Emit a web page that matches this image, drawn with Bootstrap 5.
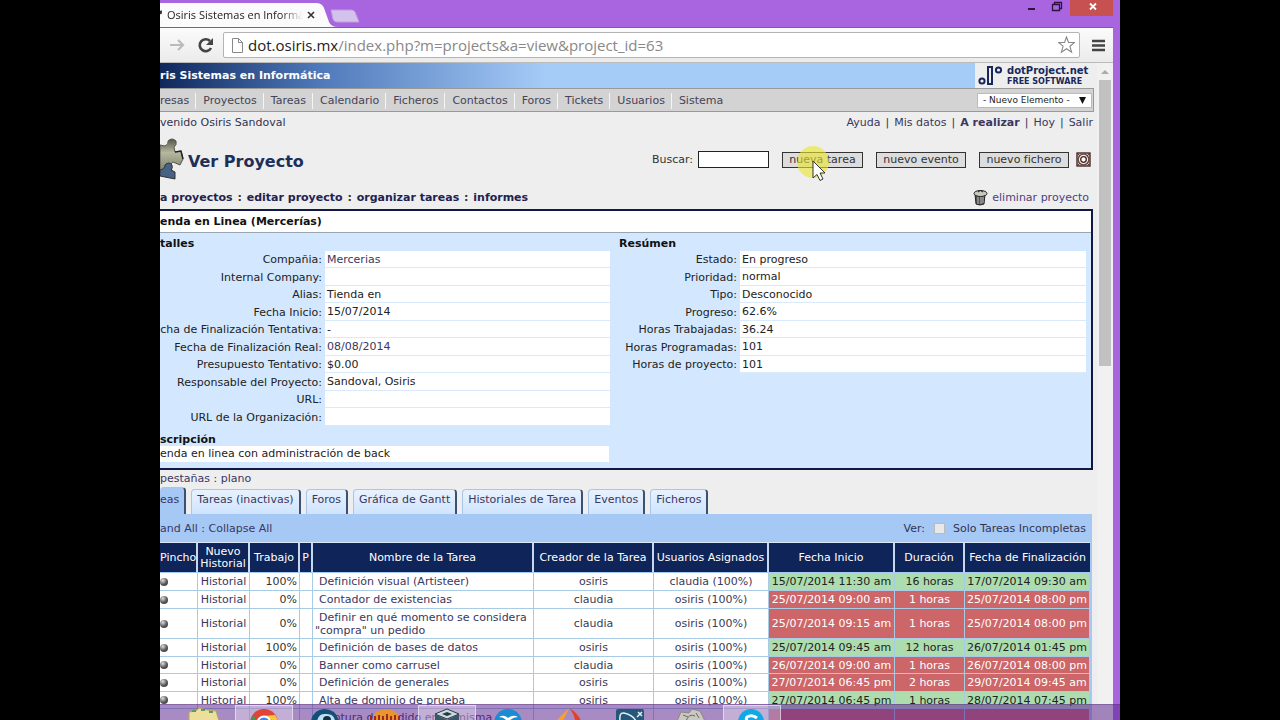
<!DOCTYPE html>
<html lang="es">
<head>
<meta charset="utf-8">
<meta name="viewport" content="width=device-width, initial-scale=1">
<title>Osiris Sistemas en Informática</title>
<link href="https://cdn.jsdelivr.net/npm/bootstrap@5.3.0/dist/css/bootstrap.min.css" rel="stylesheet">
<style>
body{background:#000;font-family:"DejaVu Sans",Verdana,sans-serif;font-size:11px;line-height:13px;color:#333}
a{color:#3a3760;text-decoration:none}
.desktop{width:75%;height:100vh;background:#a965e0;padding-right:7px}
.tabstrip{height:27px}
.page-tab{width:164px;height:24px;margin-top:3px;position:relative;color:#222}
.page-tab .shape{position:absolute;inset:0;width:178px;height:24px}
.page-tab .caption{position:relative;width:136px;margin-left:7px;white-space:nowrap;font:11px/24px "Open Sans",sans-serif;-webkit-mask-image:linear-gradient(90deg,#000 84%,transparent)}
.page-tab button,.winbtn{border:0;background:none;padding:0;position:relative;line-height:0}
.spare-tab{flex:none;margin:9px 0 0 4px}
.winbtn{height:16px;width:26px}
.winbtn.close-win{width:43px;background:#c75050;margin-left:1px}
.toolbar{height:36px;background:linear-gradient(#fbfbfb,#ebebeb);border-bottom:1px solid #bbb;border-top:1px solid #8556a8}
.omnibox{height:26px;background:#fff;border:1px solid #b4b4b4;border-radius:2px;margin-left:9px;margin-right:12px}
.url-text{font:15px/24px "Open Sans",sans-serif;color:#888;margin-left:5px;white-space:nowrap}
.url-text b{font-weight:400;color:#222}
.viewport{background:#eee;overflow:hidden}
.app{padding-right:4px}
.scroller{width:16px;background:#f1f1f1;padding:0 2px}
.thumb{height:286px;background:#c1c1c1}
.banner{height:25px;background:linear-gradient(90deg,#0f285c 0,#4f79ba 160px,#a5cbf7 385px);color:#fff;font-weight:700;line-height:15px}
.dp-logo{height:25px;width:119px;background:#eee;margin-right:-1px}
.menu{height:24px;background:#d3d3d3;border:1px solid #999;border-left:0;margin-right:-1px}
.menu .links{padding-top:1px}
.menu .links a+a{border-left:1px solid #f5f5f5}
.menu .links a{padding:0 6px 0 7px;color:#444458;line-height:16px}
.menu .links a:first-child{padding-left:0}
.menu select{font:9px "DejaVu Sans",sans-serif;width:115px;height:15px;padding:0 5px;border:1px solid #bbb;background:#fff;color:#222;appearance:none}
.menu .pick{position:relative;margin-right:1px}
.menu .pick svg{position:absolute;right:6px;top:4px;pointer-events:none}
.user{height:20px;color:#333350}
.user .sep{margin:0 5px}
.titlebar{height:55px}
.titlebar h1{font-size:16px;line-height:20px;font-weight:700;color:#1d2f5a;margin:0;padding-top:4px}
.titlebar input{width:71px;height:17px;border:1px solid #222;background:#fff;margin-left:5px}
.titlebar button.act{width:90px;height:16px;border:1px solid #333;background:#ddd;color:#333;padding:0;line-height:14px;font-size:11px;margin-left:13px}
.titlebar button.slim{width:81px}
.titlebar .help{margin:0 2px 0 7px}
.crumbs{height:20px;margin-bottom:2px;font-weight:700}
.crumbs .remove{font-weight:400}
.crumbs i{font-style:normal;margin:0 1px}
.crumbs a{color:#22224e}
.crumbs .remove a{color:#4a4280}
.panel{border:2px solid #101a44;border-left:0;background:#d3e7fe;height:261px;color:#222}
.panel h2,.panel h3{font-size:11px;font-weight:700;margin:0;color:#111}
.panel h2{height:22px;line-height:22px;background:#fff;border-bottom:1px solid #9aa6b2}
.panel h3{height:18px;line-height:22px}
.panel h3.low{height:16px;line-height:20px}
.facts{border-collapse:separate;border-spacing:0;width:100%}
.facts th{font-weight:400;text-align:right;padding:0 3px 0 0;white-space:nowrap}
.facts td{background:#fff;border-bottom:1px solid #d9eafb;padding:0 0 0 2px}
.facts tr{height:17px}
.facts tr:nth-child(even){height:18px}
.left-facts{width:450px}
.left-facts th{width:165px}
.right-facts{margin-left:9px;margin-right:5px}
.right-facts th{width:121px}
.desc{background:#fff;height:16px;width:449px;line-height:16px}
.modes{height:17px;line-height:18px}
.tabs{height:27px}
.tabs a{height:25px;margin-left:4px;margin-right:1px;padding:0 5px;line-height:20px;background:linear-gradient(#e8f2fe,#cfe4fd);border:1px solid #a9c6e8;border-right:2px solid #3c5170;border-bottom:0;border-radius:4px 4px 0 0;white-space:nowrap}
.tabs a.on{height:27px;margin-left:0;background:#a6c8f5;border-left:0;padding-left:0;line-height:24px}
.board{background:#a6c8f5;padding-right:2px;margin-right:1px}
.filter{height:28px;color:#333350}
.filter input{width:11px;height:11px;margin:0 8px 0 9px;appearance:none;background:#e8e8e8;border:1px solid #bbb}
.tasks{table-layout:fixed;width:100%;border-collapse:separate;border-spacing:0;text-align:center;white-space:nowrap;background:#fff}
.tasks th{background:#0f2458;color:#fff;font-weight:400;height:31px;line-height:12px;padding:0;border-right:2px solid #c6d8ee;border-top:1px solid #dce8f8;border-bottom:1px solid #a6c8f5}
.tasks th:last-child{border-right:0}
.tasks td{padding:0;border-right:1px solid #a8cbe6;border-bottom:1px solid #a8cbe6;height:18px;line-height:13px}
.tasks tr.short td{height:17px}
.tasks tr.tall td{height:30px}
.tasks td:nth-child(3){text-align:right;padding-right:2px;color:#333}
.tasks td:nth-child(5){text-align:left;padding-left:2px;color:#3a3760}
.tasks td:nth-child(5) a{margin-left:4px}
.tasks td:first-child{text-align:left}
.tasks td:nth-child(6),.tasks td:nth-child(7){color:#3a3a55}
.tasks .done td:nth-child(n+8){background:#addcae;color:#222}
.tasks .late td:nth-child(n+8){background:#cc6668;color:#fff}
.ball{display:block;width:8px;height:8px;border-radius:50%;background:radial-gradient(circle at 35% 30%,#ddd,#555 55%,#333)}
.taskbar{position:absolute;left:0;right:0;bottom:0;height:16px;background:rgba(92,35,142,.53);border-top:1px solid rgba(90,50,120,.4);overflow:hidden}
.taskbar .slot{width:58px;height:16px;margin-right:3px;text-align:center;line-height:0}
.taskbar .slot.first{width:72px}
.taskbar .slot.live{background:rgba(255,255,255,.3);border:1px solid rgba(255,255,255,.5)}
.pointer{position:absolute;left:638px;top:144px;pointer-events:none}
</style>
</head>
<body>
<div class="desktop mx-auto position-relative overflow-hidden d-flex flex-column">
  <div class="tabstrip d-flex align-items-start flex-shrink-0">
    <div class="page-tab d-flex align-items-center">
      <svg class="shape" viewBox="0 0 178 24"><path d="M0 0H156Q162 0 164 5L169 19Q171 24 178 24H0Z" fill="#fbfbfb"/><path d="M0 8q2-2 2 1t-2 2z" fill="#333"/></svg>
      <span class="caption">Osiris Sistemas en Informá</span>
      <button aria-label="Cerrar pestaña" class="ms-1"><svg width="8" height="8" viewBox="0 0 8 8"><path d="M1 1l6 6M7 1L1 7" stroke="#333" stroke-width="1.6"/></svg></button>
    </div>
    <svg class="spare-tab" width="33" height="14" viewBox="0 0 33 14"><path d="M3 1H23Q26 1 27 3L31 13H9Q6 13 5 10Z" fill="#d4c1ec" stroke="#bda0e0"/></svg>
    <div class="ms-auto d-flex">
      <button class="winbtn" aria-label="Minimizar"><svg width="26" height="16"><path d="M11 9h7" stroke="#2b1540" stroke-width="2"/></svg></button>
      <button class="winbtn" aria-label="Restaurar"><svg width="26" height="16"><path d="M9.500 4.500h7v6h-7zM11.500 4V2.500h7v6H17" fill="none" stroke="#2b1540" stroke-width="1.300"/></svg></button>
      <button class="winbtn close-win" aria-label="Cerrar"><svg width="43" height="16"><path d="M20 3.500l6 6M26 3.500l-6 6" stroke="#fff" stroke-width="1.800"/></svg></button>
    </div>
  </div>
  <div class="toolbar d-flex align-items-center flex-shrink-0">
    <svg class="ms-2" width="18" height="16" viewBox="0 0 18 16"><path d="M2 8h13M10 3l5 5-5 5" fill="none" stroke="#bbb" stroke-width="2.200"/></svg>
    <svg class="ms-2" width="20" height="18" viewBox="0 0 20 18"><path d="M17 12A6 6 0 1 1 16 5" fill="none" stroke="#444" stroke-width="2.600"/><path d="M19 2v7h-7z" fill="#444"/></svg>
    <div class="omnibox d-flex align-items-center flex-grow-1">
      <svg class="ms-2" width="11" height="15" viewBox="0 0 11 15"><path d="M.5.5h6l4 4v10H.5zM6.500.5v4h4" fill="#fff" stroke="#888"/></svg>
      <div class="url-text flex-grow-1" role="textbox" aria-label="Dirección"><b>dot.osiris.mx</b>/index.php?m=projects&amp;a=view&amp;project_id=63</div>
      <svg class="me-1" width="17" height="18" viewBox="0 0 17 18"><path d="M8.500 1l2 5.500h6l-4.600 3.700 1.700 6-5.100-3.500-5.100 3.500 1.700-6L.6 6.500h5.900z" fill="#fff" stroke="#888" stroke-width="1.100"/></svg>
    </div>
    <svg class="me-2" width="13" height="13" viewBox="0 0 13 13"><path d="M0 2h13M0 6.500h13M0 11h13" stroke="#444" stroke-width="2.600"/></svg>
  </div>
  <div class="viewport d-flex flex-grow-1">
    <main class="app flex-grow-1">
      <div class="banner d-flex align-items-center">
        <span>ris Sistemas en Informática</span>
        <a href="#" class="dp-logo ms-auto d-block"><svg width="119" height="25" viewBox="0 0 119 25"><g fill="none" stroke="#17285c" stroke-width="2"><circle cx="7" cy="18" r="2.600"/><path d="M13 4h4v17h-4z"/><circle cx="23.500" cy="7" r="2.600"/></g><g fill="#17285c" font-family="DejaVu Sans" font-weight="700"><text x="32" y="11" font-size="10">dotProject.net</text><text x="32" y="21" font-size="8">FREE SOFTWARE</text></g></svg></a>
      </div>
      <nav class="menu d-flex align-items-center justify-content-between">
        <div class="links d-flex"><a href="#">resas</a><a href="#">Proyectos</a><a href="#">Tareas</a><a href="#">Calendario</a><a href="#">Ficheros</a><a href="#">Contactos</a><a href="#">Foros</a><a href="#">Tickets</a><a href="#">Usuarios</a><a href="#">Sistema</a></div>
        <div class="pick d-flex"><select aria-label="Nuevo Elemento"><option>- Nuevo Elemento -</option></select><svg width="7" height="7" viewBox="0 0 7 7"><path d="M0 0h7L3.500 7z" fill="#111"/></svg></div>
      </nav>
      <div class="user d-flex align-items-center justify-content-between"><span>venido Osiris Sandoval</span><span><a href="#">Ayuda</a><span class="sep">|</span><a href="#">Mis datos</a><span class="sep">|</span><a href="#"><b>A realizar</b></a><span class="sep">|</span><a href="#">Hoy</a><span class="sep">|</span><a href="#">Salir</a></span></div>
      <div class="titlebar d-flex align-items-center">
        <svg width="28" height="46" viewBox="0 0 28 46"><defs><linearGradient id="pz" x2="0" y2="1"><stop stop-color="#555848"/><stop offset=".4" stop-color="#b6b7a0"/><stop offset="1" stop-color="#777a68"/></linearGradient></defs><path d="M0 8l5 1q4-2 3-5 4-4 8 0 1 4-2 6l1 5 6-1 2 8-3 6-7-3q-4 2-2 6l2 5H0z" fill="url(#pz)" stroke="#55574c"/><path d="M0 33q5-1 5-5 4-4 7 0 1 3-1 5l4 2v7l-15-3z" fill="#456184" stroke="#333"/><path d="M15 15l6-1 2 8" fill="none" stroke="#222" stroke-width="1.500"/></svg>
        <h1>Ver Proyecto</h1>
        <form class="ms-auto d-flex align-items-center" onsubmit="return false"><label for="q">Buscar:</label><input id="q" type="text"><button class="act slim" type="button">nueva tarea</button><button class="act" type="button">nuevo evento</button><button class="act" type="button">nuevo fichero</button>
        <svg class="help" width="15" height="15" viewBox="0 0 15 15"><rect x="1" y="1" width="13" height="13" fill="#d3bcb6" stroke="#322" stroke-width="1.300"/><circle cx="7.500" cy="7.500" r="5.300" fill="#eee" stroke="#6c4640" stroke-width="1.300"/><circle cx="7.500" cy="7.500" r="2.800" fill="#fff" stroke="#422" stroke-width="1.300"/><path d="M2 2l2 2m7 7l2 2m0-11l-2 2m-7 7l-2 2" stroke="#633"/></svg></form>
      </div>
      <div class="crumbs d-flex align-items-center justify-content-between"><span><a href="#">a proyectos</a> <i>:</i> <a href="#">editar proyecto</a> <i>:</i> <a href="#">organizar tareas</a> <i>:</i> <a href="#">informes</a></span>
        <span class="remove d-flex align-items-center me-1"><svg class="me-1" width="15" height="17" viewBox="0 0 15 17"><path d="M2 5l1 10q4 2 8 0l1-10z" fill="#555" stroke="#222"/><path d="M5 7v8M8 7v8M10 7v7" stroke="#bbb"/><ellipse cx="7.500" cy="4.500" rx="6.500" ry="3" fill="#c9c9bf" stroke="#222"/><path d="M5 3q2-3 5 0" fill="none" stroke="#222"/></svg><a href="#">eliminar proyecto</a></span></div>
      <section class="panel">
        <h2>enda en Linea (Mercerías)</h2>
        <div class="d-flex">
          <div class="left-facts flex-shrink-0"><h3>talles</h3>
            <table class="facts">
              <tr><th>Compañia:</th><td><a href="#">Mercerias</a></td></tr>
              <tr><th>Internal Company:</th><td></td></tr>
              <tr><th>Alias:</th><td>Tienda en</td></tr>
              <tr><th>Fecha Inicio:</th><td>15/07/2014</td></tr>
              <tr><th>cha de Finalización Tentativa:</th><td>-</td></tr>
              <tr><th>Fecha de Finalización Real:</th><td><a href="#">08/08/2014</a></td></tr>
              <tr><th>Presupuesto Tentativo:</th><td>$0.00</td></tr>
              <tr><th>Responsable del Proyecto:</th><td>Sandoval, Osiris</td></tr>
              <tr><th>URL:</th><td></td></tr>
              <tr><th>URL de la Organización:</th><td></td></tr>
            </table>
            <h3 class="mt-1 low">scripción</h3>
            <div class="desc">enda en linea con administración de back</div>
          </div>
          <div class="right-facts flex-grow-1"><h3>Resúmen</h3>
            <table class="facts">
              <tr><th>Estado:</th><td>En progreso</td></tr>
              <tr><th>Prioridad:</th><td>normal</td></tr>
              <tr><th>Tipo:</th><td>Desconocido</td></tr>
              <tr><th>Progreso:</th><td>62.6%</td></tr>
              <tr><th>Horas Trabajadas:</th><td>36.24</td></tr>
              <tr><th>Horas Programadas:</th><td>101</td></tr>
              <tr><th>Horas de proyecto:</th><td>101</td></tr>
            </table>
          </div>
        </div>
      </section>
      <div class="modes"><a href="#">pestañas</a> : <a href="#">plano</a></div>
      <div class="tabs d-flex align-items-end"><a class="on" href="#">eas</a><a href="#">Tareas (inactivas)</a><a href="#">Foros</a><a href="#">Gráfica de Gantt</a><a href="#">Historiales de Tarea</a><a href="#">Eventos</a><a href="#">Ficheros</a></div>
      <div class="board">
        <div class="filter d-flex align-items-center justify-content-between"><span><a href="#">and All</a> : <a href="#">Collapse All</a></span><span class="d-flex align-items-center me-1">Ver: <input type="checkbox" id="inc"><label for="inc">Solo Tareas Incompletas</label></span></div>
        <table class="tasks">
          <colgroup><col style="width:38px"><col style="width:52px"><col style="width:50px"><col style="width:13px"><col><col style="width:120px"><col style="width:115px"><col style="width:126px"><col style="width:70px"><col style="width:125px"></colgroup>
          <thead><tr><th>Pincho</th><th>Nuevo<br>Historial</th><th>Trabajo</th><th>P</th><th>Nombre de la Tarea</th><th>Creador de la Tarea</th><th>Usuarios Asignados</th><th>Fecha Inicio</th><th>Duración</th><th>Fecha de Finalización</th></tr></thead>
          <tbody>
            <tr class="done"><td><i class="ball"></i></td><td><a href="#">Historial</a></td><td>100%</td><td></td><td><a href="#">Definición visual (Artisteer)</a></td><td>osiris</td><td>claudia (100%)</td><td>15/07/2014 11:30 am</td><td>16 horas</td><td>17/07/2014 09:30 am</td></tr>
            <tr class="late"><td><i class="ball"></i></td><td><a href="#">Historial</a></td><td>0%</td><td></td><td><a href="#">Contador de existencias</a></td><td>claudia</td><td>osiris (100%)</td><td>25/07/2014 09:00 am</td><td>1 horas</td><td>25/07/2014 08:00 pm</td></tr>
            <tr class="late tall"><td><i class="ball"></i></td><td><a href="#">Historial</a></td><td>0%</td><td></td><td><a href="#">Definir en qué momento se considera<br>"compra" un pedido</a></td><td>claudia</td><td>osiris (100%)</td><td>25/07/2014 09:15 am</td><td>1 horas</td><td>25/07/2014 08:00 pm</td></tr>
            <tr class="done"><td><i class="ball"></i></td><td><a href="#">Historial</a></td><td>100%</td><td></td><td><a href="#">Definición de bases de datos</a></td><td>osiris</td><td>osiris (100%)</td><td>25/07/2014 09:45 am</td><td>12 horas</td><td>26/07/2014 01:45 pm</td></tr>
            <tr class="late short"><td><i class="ball"></i></td><td><a href="#">Historial</a></td><td>0%</td><td></td><td><a href="#">Banner como carrusel</a></td><td>claudia</td><td>osiris (100%)</td><td>26/07/2014 09:00 am</td><td>1 horas</td><td>26/07/2014 08:00 pm</td></tr>
            <tr class="late"><td><i class="ball"></i></td><td><a href="#">Historial</a></td><td>0%</td><td></td><td><a href="#">Definición de generales</a></td><td>osiris</td><td>osiris (100%)</td><td>27/07/2014 06:45 pm</td><td>2 horas</td><td>29/07/2014 09:45 am</td></tr>
            <tr class="done short"><td><i class="ball"></i></td><td><a href="#">Historial</a></td><td>100%</td><td></td><td><a href="#">Alta de dominio de prueba</a></td><td>osiris</td><td>osiris (100%)</td><td>27/07/2014 06:45 pm</td><td>1 horas</td><td>28/07/2014 07:45 pm</td></tr>
            <tr class="late"><td></td><td></td><td></td><td></td><td><a href="#">Captura de pedido en la misma</a></td><td></td><td></td><td></td><td></td><td></td></tr>
          </tbody>
        </table>
      </div>
    </main>
    <div class="scroller flex-shrink-0"><svg class="d-block mx-auto" width="12" height="17" viewBox="0 0 12 17"><path d="M2 11l4-4 4 4z" fill="#aaa"/></svg><div class="thumb"></div></div>
  </div>
  <svg class="pointer" width="40" height="40" viewBox="0 0 40 40"><circle cx="15" cy="18" r="16" fill="#ece62c" opacity=".6"/><path d="M15 17v17l4-3.500 3 6 3-1.500-3-6h5z" fill="#fff" stroke="#333"/></svg>
  <div class="taskbar d-flex">
    <div class="slot first"><svg class="ms-3" width="34" height="16" viewBox="0 0 34 16"><path d="M2 16V7l7-1 3-3 8 2 9 1 3 10z" fill="#ecdf9c" stroke="#b9a560"/><path d="M5 6h4M14 5h4M22 7h4" stroke="#5b9b63" stroke-width="2"/></svg></div>
    <div class="slot live"><svg width="30" height="16" viewBox="0 0 30 16"><circle cx="15" cy="17" r="14" fill="#df4437"/><path d="M29 17a14 14 0 0 0-3-8L15 10z" fill="#f4ca3c"/><path d="M1 17l3-8 7 9z" fill="#3a9b55"/><circle cx="15" cy="17" r="6.500" fill="#4384e8" stroke="#fff" stroke-width="2"/></svg></div>
    <div class="slot"><svg width="30" height="16" viewBox="0 0 30 16"><path d="M1 16Q3 5 14 4q12 0 15 12z" fill="#174e77"/><path d="M7 16q2-8 8-7 9-1 10 7z" fill="#bce1f0"/><circle cx="17" cy="15" r="4" fill="#143149"/></svg></div>
    <div class="slot"><svg width="34" height="16" viewBox="0 0 34 16"><path d="M3 16Q5 4 17 4t14 12z" fill="#e99430"/><path d="M2 16v-5m4 5V11m4 5V10m4 6V11m4 5V9m4 7V11m4 5V10m4 6v-5" stroke="#9b2c1c" stroke-width="2"/></svg></div>
    <div class="slot live"><svg width="30" height="16" viewBox="0 0 30 16"><path d="M3 8l12-5 12 5-12 5z" fill="#ced9dc" stroke="#233b47"/><path d="M3 8v8h24V8l-12 6z" fill="#3a5765"/><path d="M10 8l5-2 5 2-5 2z" fill="#233b47"/></svg></div>
    <div class="slot"><svg width="30" height="16" viewBox="0 0 30 16"><circle cx="15" cy="18" r="14" fill="#1d8bd1"/><path d="M6 12q5-3 9 1 5-4 10-1-5 0-9 4h-2q-3-4-8-4z" fill="#fff"/></svg></div>
    <div class="slot"><svg width="30" height="16" viewBox="0 0 30 16"><path d="M2 16Q7 11 15 3L9 16z" fill="#f5a12d"/><path d="M15 3q9 5 12 13h-6q0-6-6-13z" fill="#e2422a"/></svg></div>
    <div class="slot"><svg width="30" height="16" viewBox="0 0 30 16"><path d="M1 16V6q0-2 2-2h24q2 0 2 2v10z" fill="#245779"/><path d="M5 16q-1-9 4-8 9 2 12 8M22 12l5-5m-4 0l4 4" fill="none" stroke="#e6eff4" stroke-width="1.500"/></svg></div>
    <div class="slot"><svg width="34" height="16" viewBox="0 0 34 16"><path d="M3 16l4-9 8 1 3-4 8 2 5 10z" fill="#c9c9c1" stroke="#888"/><path d="M12 16q3-8 9-5M9 10l5 2m8-4l3 5" fill="none" stroke="#696963"/></svg></div>
    <div class="slot live"><svg width="30" height="16" viewBox="0 0 30 16"><circle cx="14" cy="16" r="13" fill="#10a9e6"/><path d="M20 12q-5-4-10-1-2 3 2 5h9" fill="none" stroke="#fff" stroke-width="3"/></svg></div>
  </div>
</div>
<script src="https://cdn.jsdelivr.net/npm/bootstrap@5.3.0/dist/js/bootstrap.bundle.min.js"></script>
</body>
</html>
